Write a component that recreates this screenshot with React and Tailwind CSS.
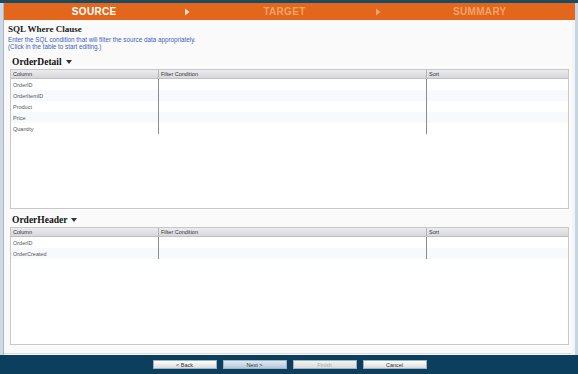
const sections = [
  { name: 'OrderDetail', rows: ['OrderID', 'OrderItemID', 'Product', 'Price', 'Quantity'], height: 'h-[140px]' },
  { name: 'OrderHeader', rows: ['OrderID', 'OrderCreated'], height: 'h-[118px]' },
];

function Grid({ rows, height }) {
  return (
    <div className={`ml-[6px] mr-[3px] ${height} border border-[#c8c8c8] bg-white flex flex-col`}>
      {/* header */}
      <div className="flex h-[9px] bg-gradient-to-b from-[#ececf0] to-[#d6d6dc] border-b border-[#bfbfc6] text-[5.5px] leading-[9px] text-[#333]">
        <div className="w-[147px] px-[2px]">Column</div>
        <div className="w-[268px] px-[2px] border-l border-[#b4b4b4]">Filter Condition</div>
        <div className="flex-1 px-[2px] border-l border-[#b4b4b4]">Sort</div>
      </div>
      {rows.map((r, i) => (
        <div key={r} className={`flex h-[11px] text-[5.5px] leading-[12px] text-[#555] ${i % 2 ? 'bg-[#f6fafc]' : 'bg-white'}`}>
          <div className="w-[147px] px-[2px]">{r}</div>
          <div className="w-[268px] border-l border-[#8c8c8c]" />
          <div className="flex-1 border-l border-[#8c8c8c]" />
        </div>
      ))}
    </div>
  );
}

function Steps() {
  const steps = [
    { label: 'SOURCE', active: true },
    { label: 'TARGET' },
    { label: 'SUMMARY' },
  ];
  return (
    <div className="h-[17px] bg-[#e2661b] flex items-center font-['Liberation_Sans',sans-serif] font-bold text-[10px] tracking-[0.3px]">
      {steps.map((s, i) => (
        <div key={s.label} className="flex-1 flex items-center min-w-0">
          <div className={`flex-1 text-center ${s.active ? 'text-white' : 'text-[#f3a46b]'}`}>{s.label}</div>
          {i < 2 && (
            <svg width="6" height="8" viewBox="0 0 6 8" className="mr-[4px]">
              <path d="M1 0.5 L5.5 4 L1 7.5 Z" fill={i === 0 ? '#fbe0cc' : '#f3a46b'} />
            </svg>
          )}
        </div>
      ))}
    </div>
  );
}

function Btn({ children, primary, disabled }) {
  return (
    <button
      className={`w-[64px] h-[9px] text-[5.5px] leading-[9px] border border-[#9fb0bf] ${
        primary
          ? 'bg-gradient-to-b from-[#dfe8f2] to-[#b6c8dc] text-[#333]'
          : disabled
          ? 'bg-gradient-to-b from-[#f2f2f2] to-[#dcdcdc] text-[#aaa]'
          : 'bg-gradient-to-b from-white to-[#dcdcdc] text-[#333]'
      }`}
    >
      {children}
    </button>
  );
}

export default function App() {
  return (
    <div className="w-[578px] h-[374px] flex flex-col bg-[#c7d5e2] font-['Liberation_Sans',sans-serif] overflow-hidden">
      <div className="h-[3px] bg-[#1c4b5f]" />
      <div className="flex-1 flex min-h-0">
        <div className="w-[4px] bg-[#cfd9e4] border-r border-[#aab8c6]" />
        <div className="flex-1 flex flex-col min-w-0">
          <Steps />
          <div className="flex-1 bg-[#fafafa] flex flex-col border-r-[3px] border-[#f2f4f6]">
            <div className="pl-[4px] pt-[4px]">
              <div className="font-['Liberation_Serif',serif] font-bold text-[9px] leading-[11px] text-[#222]">SQL Where Clause</div>
              <div className="text-[6.3px] leading-[7px] text-[#3b5ec0] mt-[1px]">
                Enter the SQL condition that will filter the source data appropriately.
                <br />
                (Click in the table to start editing.)
              </div>
            </div>
            {sections.map((s, idx) => (
              <div key={s.name} className={idx === 0 ? 'mt-[5px]' : 'mt-[4px]'}>
                <div className="flex items-center gap-[4px] pl-[8px] h-[14px] font-['Liberation_Serif',serif] font-bold text-[9.5px] text-[#111]">
                  {s.name}
                  <svg width="6" height="4" viewBox="0 0 6 4">
                    <path d="M0 0 H6 L3 4 Z" fill="#333" />
                  </svg>
                </div>
                <Grid rows={s.rows} height={s.height} />
              </div>
            ))}
            <div className="flex-1" />
            <div className="h-[2px] border-t border-[#d8dde2]" />
          </div>
        </div>
        <div className="w-[3px] bg-[#c7d5e2]" />
      </div>
      <div className="h-[19px] bg-[#0c3f5e] flex items-center justify-center gap-[6px] pl-[1px]">
        <Btn>&lt; Back</Btn>
        <Btn primary>Next &gt;</Btn>
        <Btn disabled>Finish</Btn>
        <Btn>Cancel</Btn>
      </div>
    </div>
  );
}
